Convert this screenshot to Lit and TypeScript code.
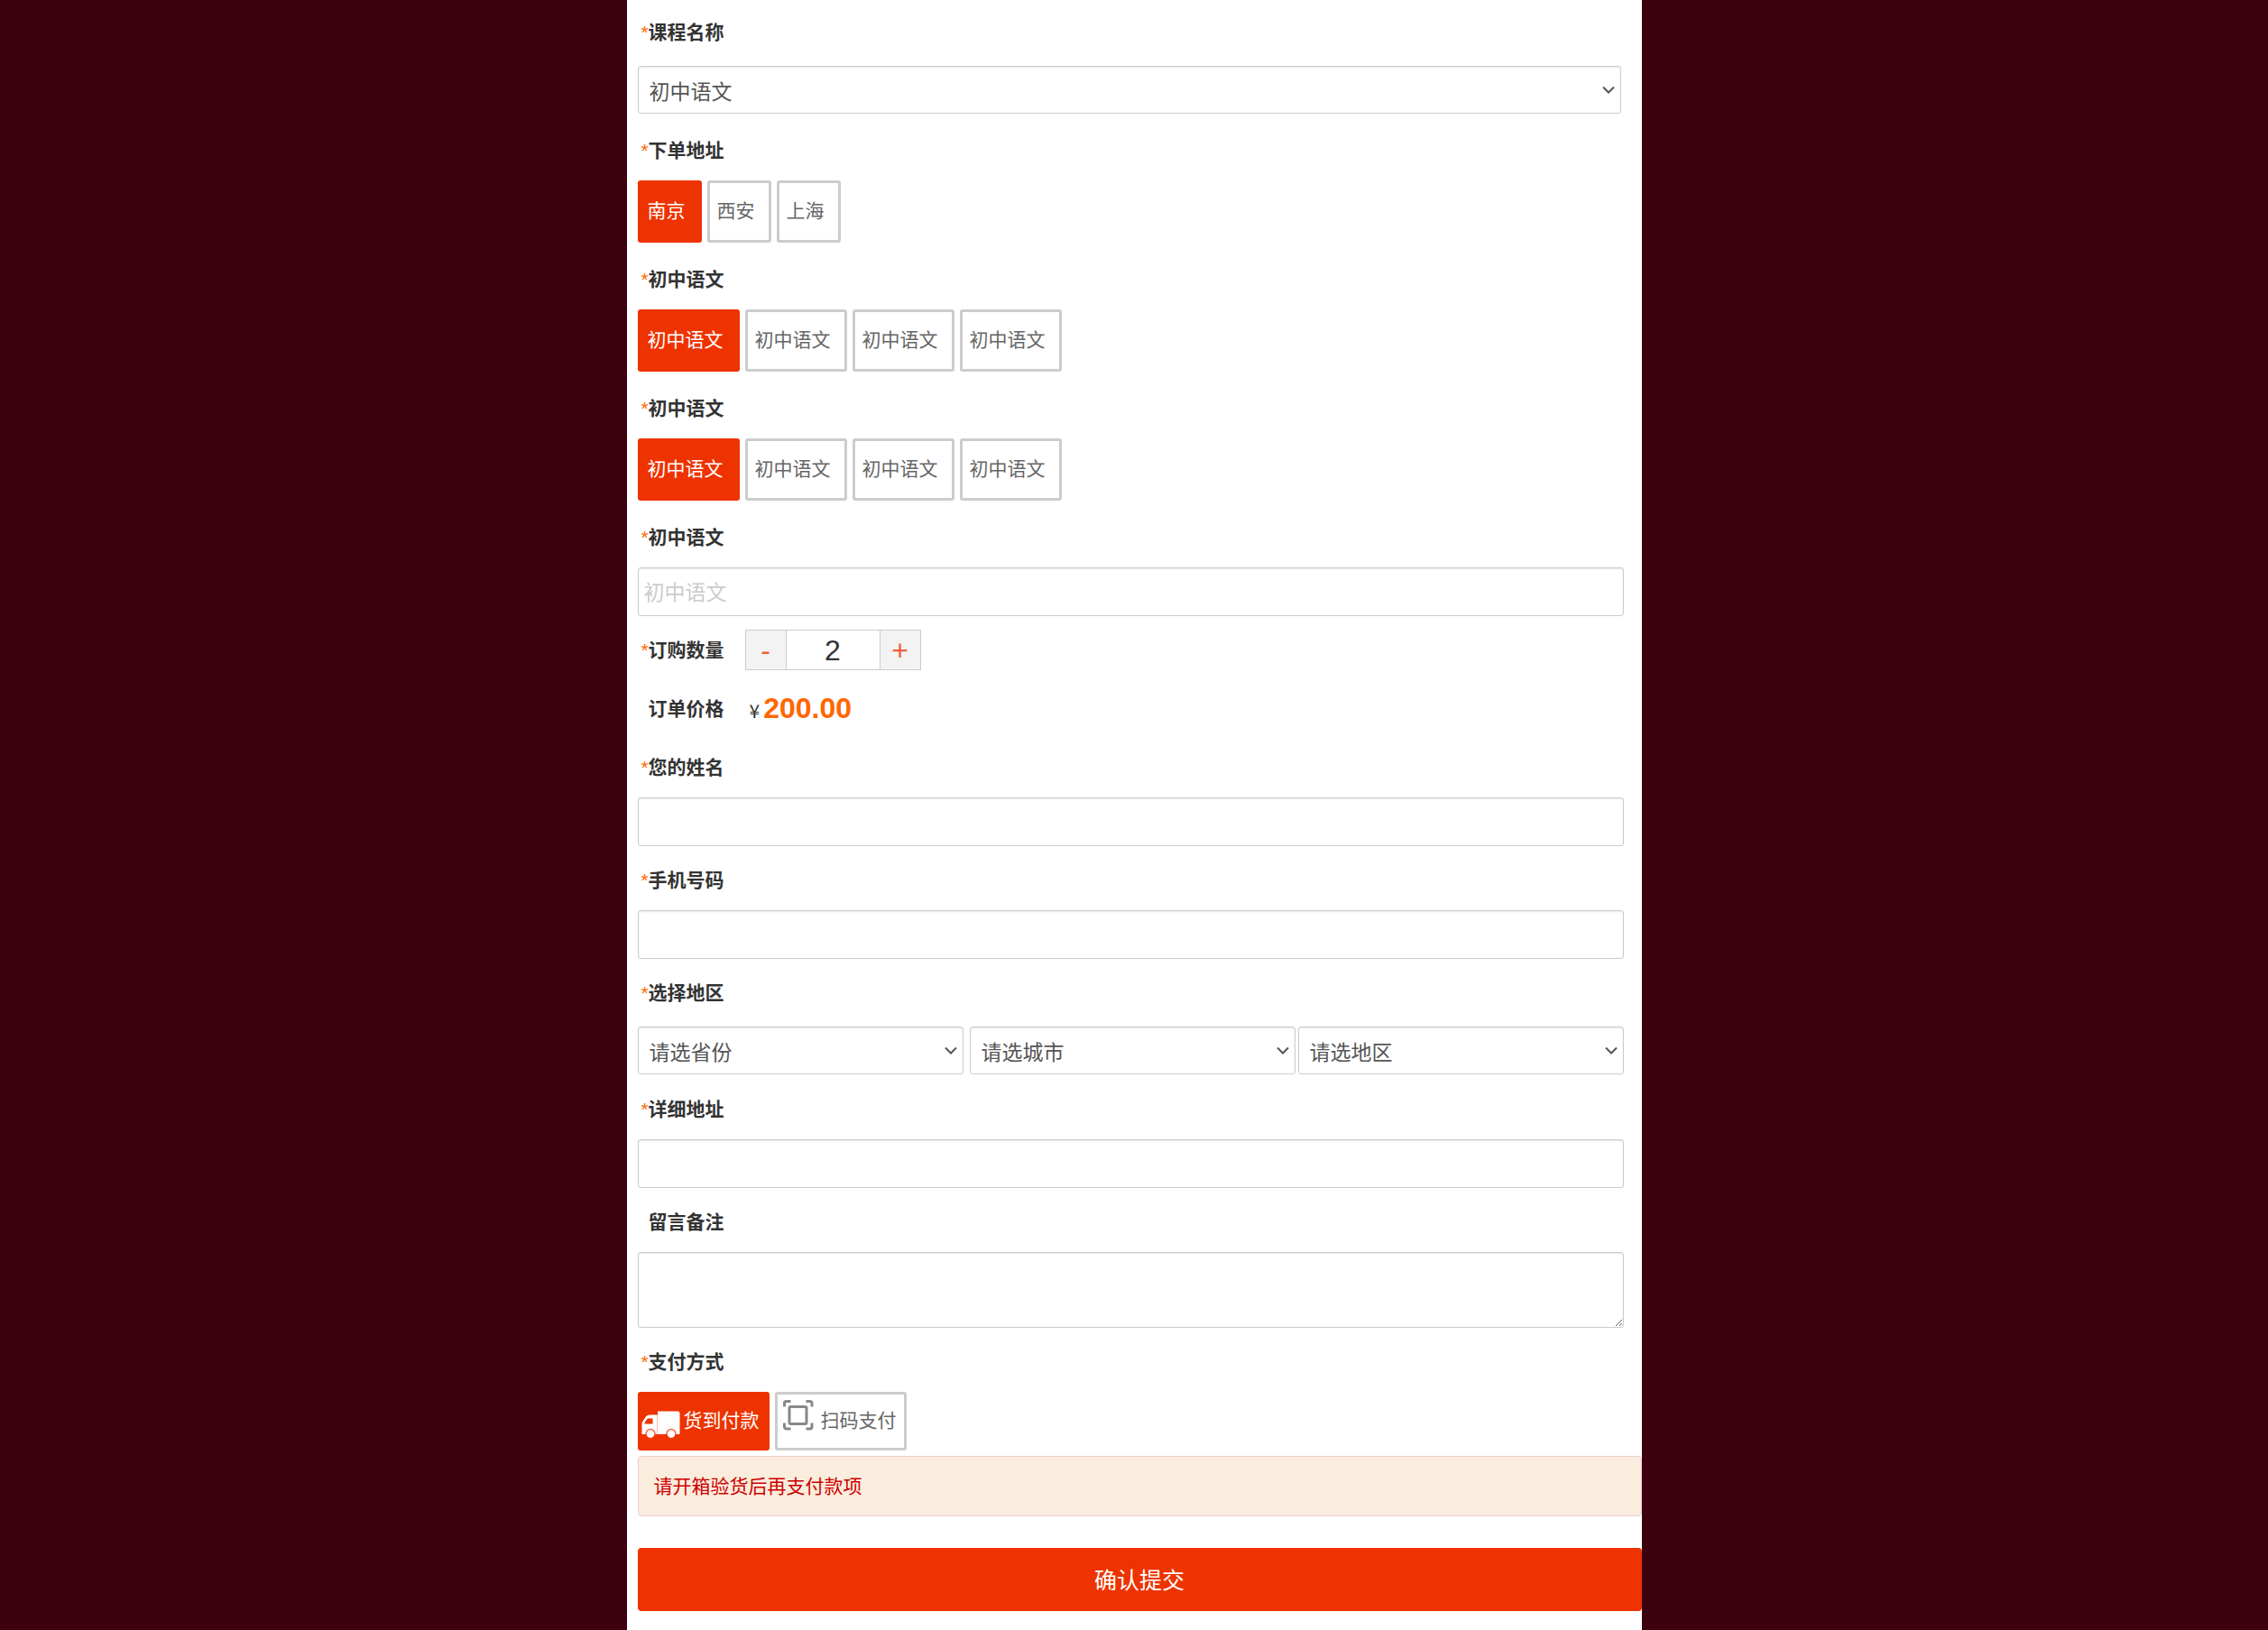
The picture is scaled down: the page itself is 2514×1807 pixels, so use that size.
import { LitElement, html, css, svg, nothing } from "lit";
import { customElement, property, state } from "lit/decorators.js";
import { classMap } from "lit/directives/class-map.js";

const sharedStyles = css`
  *,
  *::before,
  *::after {
    box-sizing: border-box;
  }
  button,
  input,
  select,
  textarea {
    margin: 0;
    font-family: inherit;
  }
`;

const truckIcon = svg`
  <path fill="#fff" d="M18 14.500h22.500a2 2 0 0 1 2 2v23.500h-42v-11.500q0-1.500 1-3l3.500-5q1.500-2 4-2h9z" />
  <path fill="#ee3300" d="M7 22.500h5.500v6h-9q0-1.500 1-3z" />
  <path stroke="#ee3300" stroke-opacity=".35" d="M17.500 15v25" />
  <circle cx="10" cy="39.500" r="5" fill="#fff" stroke="#ee3300" stroke-opacity=".75" stroke-width="1.500" />
  <circle cx="33" cy="39.500" r="5" fill="#fff" stroke="#ee3300" stroke-opacity=".75" stroke-width="1.500" />
`;

const scanIcon = svg`
  <g fill="none" stroke="#888" stroke-width="3">
    <rect x="12" y="9.500" width="19" height="19" rx="1.500" />
    <path d="M6.500 9.500v-4q0-2 2-2h5M30.500 3.500h4q2.500 0 2.500 2v4M37 27.500v4q0 2.500-2.500 2.500h-4M13.500 34h-4.500q-2.500 0-2.500-2.500v-4" />
  </g>
`;

@customElement("field-label")
class FieldLabel extends LitElement {
  @property() text = "";
  @property({ type: Boolean }) required = false;

  static styles = css`
    :host {
      display: inline-flex;
    }
    .mark {
      width: 8px;
      font-weight: 400;
      color: #ff6600;
    }
  `;

  render() {
    return html`<span class="mark">${this.required ? "*" : "\u00a0"}</span><span>${this.text}</span>`;
  }
}

@customElement("option-chips")
class OptionChips extends LitElement {
  @property({ attribute: false }) options: string[] = [];
  @property({ attribute: false }) icons: unknown[] = [];
  @property() label = "";
  @state() private selected = 0;

  static styles = [
    sharedStyles,
    css`
      :host {
        display: block;
      }
      .chips {
        display: flex;
        flex-wrap: wrap;
        gap: 6px;
      }
      .chip {
        display: flex;
        align-items: center;
        height: 69px;
        padding: 0 15px 2px 8px;
        border: 3px solid #ccc;
        border-radius: 3px;
        background: #fff;
        color: #666;
        font-size: 21px;
        line-height: 32px;
        cursor: pointer;
      }
      .chip.with-icon {
        gap: 4px;
        height: 65px;
        padding: 0 8px 2px 1px;
      }
      .chip.active {
        border-color: #ee3300;
        background: #ee3300;
        color: #fff;
      }
      .icon {
        width: 43px;
        height: 50px;
      }
    `,
  ];

  render() {
    return html`<div class="chips" role="group" aria-label=${this.label}>
      ${this.options.map(
        (option, i) => html`<button
          type="button"
          class=${classMap({ chip: true, active: i === this.selected, "with-icon": !!this.icons[i] })}
          aria-pressed=${i === this.selected}
          @click=${() => (this.selected = i)}
        >
          ${this.icons[i]
            ? html`<svg class="icon" viewBox="0 0 43 50" aria-hidden="true">${this.icons[i]}</svg>`
            : nothing}<span>${option}</span>
        </button>`
      )}
    </div>`;
  }
}

@customElement("app-root")
class AppRoot extends LitElement {
  @state() private quantity = 2;

  static styles = [
    sharedStyles,
    css`
      :host {
        display: block;
        min-height: 100vh;
        background: #3c000f;
        color: #333;
        font-family: "Liberation Sans", "Noto Sans CJK SC", sans-serif;
        font-size: 21px;
      }
      .panel {
        max-width: 1125px;
        min-height: 100vh;
        margin: 0 auto;
        padding: 3px 0 20px 12px;
        background: #fff;
      }
      .fields {
        padding-right: 20px;
      }
      .group {
        margin-bottom: 5px;
      }
      .group.roomy {
        margin-bottom: 8px;
      }
      .label {
        display: block;
        width: max-content;
        height: 66px;
        padding-left: 4px;
        font-weight: 700;
        line-height: 66px;
      }
      .row {
        display: flex;
        align-items: center;
        gap: 23px;
        height: 65px;
      }
      .control {
        display: block;
        width: 100%;
        height: 54px;
        padding: 2px 6px 0;
        border: 1px solid #ccc;
        border-radius: 3px;
        background: #fff;
        box-shadow: inset 0 1px 2px rgba(0, 0, 0, 0.1);
        color: #555;
        font-size: 23px;
      }
      .control::placeholder {
        color: #ccc;
        opacity: 1;
      }
      .area {
        height: 84px;
        padding: 6px;
        resize: vertical;
      }
      .pick {
        position: relative;
        flex: 1;
        margin: 4px 0 1px;
      }
      .select {
        height: 53px;
        padding: 4px 32px 0 12px;
        appearance: none;
      }
      .chevron {
        position: absolute;
        top: 22px;
        right: 7px;
        width: 14px;
        height: 9px;
        pointer-events: none;
      }
      .course {
        margin-right: 3px;
      }
      .region {
        display: flex;
        gap: 3px;
      }
      .province {
        margin-right: 4px;
      }
      .stepper {
        display: flex;
        height: 45px;
        border: 1px solid #ccc;
      }
      .step {
        width: 44px;
        padding: 2px 0 0;
        border: 0;
        background: #f3f3f3;
        color: #f0603c;
        font-size: 32px;
        line-height: 41px;
        cursor: pointer;
      }
      .count {
        width: 105px;
        padding: 2px 0 0;
        border: solid #ccc;
        border-width: 0 1px;
        color: #333;
        font-size: 32px;
        text-align: center;
      }
      .price {
        display: flex;
        align-items: baseline;
        gap: 4px;
        padding-left: 5px;
        line-height: 36px;
      }
      .currency {
        font-family: "Noto Sans CJK SC", sans-serif;
      }
      .amount {
        color: #ff6600;
        font-size: 32px;
        font-weight: 700;
      }
      .notice {
        margin: 6px 0 35px;
        padding: 0 17px;
        border: 1px solid #ebccd1;
        border-radius: 4px;
        background: #fbeddd;
        color: #c00;
        line-height: 65px;
      }
      .submit {
        display: block;
        width: 100%;
        height: 70px;
        padding: 0 0 2px;
        border: 0;
        border-radius: 4px;
        background: #ee3300;
        color: #fff;
        font-size: 25px;
        cursor: pointer;
      }
    `,
  ];

  private setQuantity(value: number) {
    this.quantity = Math.max(1, value || 1);
  }

  private labelFor(id: string, text: string, required = true) {
    return html`<label class="label" for=${id}
      ><field-label text=${text} ?required=${required}></field-label
    ></label>`;
  }

  private pick(id: string, text: string, kind: string, name = text) {
    return html`<div class="pick ${kind}">
      <select class="control select" id=${id} aria-label=${name}>
        <option>${text}</option>
      </select>
      <svg class="chevron" viewBox="0 0 14 9" aria-hidden="true">
        <path d="M1 1.500l6 6 6-6" fill="none" stroke="#555" stroke-width="2" />
      </svg>
    </div>`;
  }

  private chipGroup(text: string, options: string[]) {
    return html`<div class="group roomy">
      <div class="label"><field-label text=${text} required></field-label></div>
      <option-chips label=${text} .options=${options}></option-chips>
    </div>`;
  }

  private textGroup(id: string, text: string, placeholder = "") {
    return html`<div class="group">
      ${this.labelFor(id, text)}
      <input class="control" id=${id} type="text" placeholder=${placeholder} />
    </div>`;
  }

  render() {
    const lessons = Array(4).fill("初中语文");
    return html`<form class="panel" @submit=${(e: Event) => e.preventDefault()}>
      <div class="fields">
        <div class="group roomy">
          ${this.labelFor("course", "课程名称")} ${this.pick("course", "初中语文", "course", "课程名称")}
        </div>
        ${this.chipGroup("下单地址", ["南京", "西安", "上海"])} ${this.chipGroup("初中语文", lessons)}
        ${this.chipGroup("初中语文", lessons)} ${this.textGroup("lesson", "初中语文", "初中语文")}
        <div class="row">
          ${this.labelFor("quantity", "订购数量")}
          <div class="stepper">
            <button class="step" type="button" @click=${() => this.setQuantity(this.quantity - 1)}>-</button>
            <input
              class="count"
              id="quantity"
              type="text"
              inputmode="numeric"
              .value=${String(this.quantity)}
              @change=${(e: Event) => this.setQuantity(parseInt((e.target as HTMLInputElement).value, 10))}
            />
            <button class="step" type="button" @click=${() => this.setQuantity(this.quantity + 1)}>+</button>
          </div>
        </div>
        <div class="row">
          <div class="label"><field-label text="订单价格"></field-label></div>
          <div class="price">
            <span class="currency">¥</span><span class="amount">${(this.quantity * 100).toFixed(2)}</span>
          </div>
        </div>
        ${this.textGroup("name", "您的姓名")} ${this.textGroup("phone", "手机号码")}
        <div class="group">
          ${this.labelFor("province", "选择地区")}
          <div class="region">
            ${this.pick("province", "请选省份", "province")} ${this.pick("city", "请选城市", "city")}
            ${this.pick("district", "请选地区", "district")}
          </div>
        </div>
        ${this.textGroup("address", "详细地址")}
        <div class="group">
          ${this.labelFor("note", "留言备注", false)}
          <textarea class="control area" id="note"></textarea>
        </div>
        <div class="label"><field-label text="支付方式" required></field-label></div>
        <option-chips
          label="支付方式"
          .options=${["货到付款", "扫码支付"]}
          .icons=${[truckIcon, scanIcon]}
        ></option-chips>
      </div>
      <div class="notice">请开箱验货后再支付款项</div>
      <button class="submit" type="submit">确认提交</button>
    </form>`;
  }
}
